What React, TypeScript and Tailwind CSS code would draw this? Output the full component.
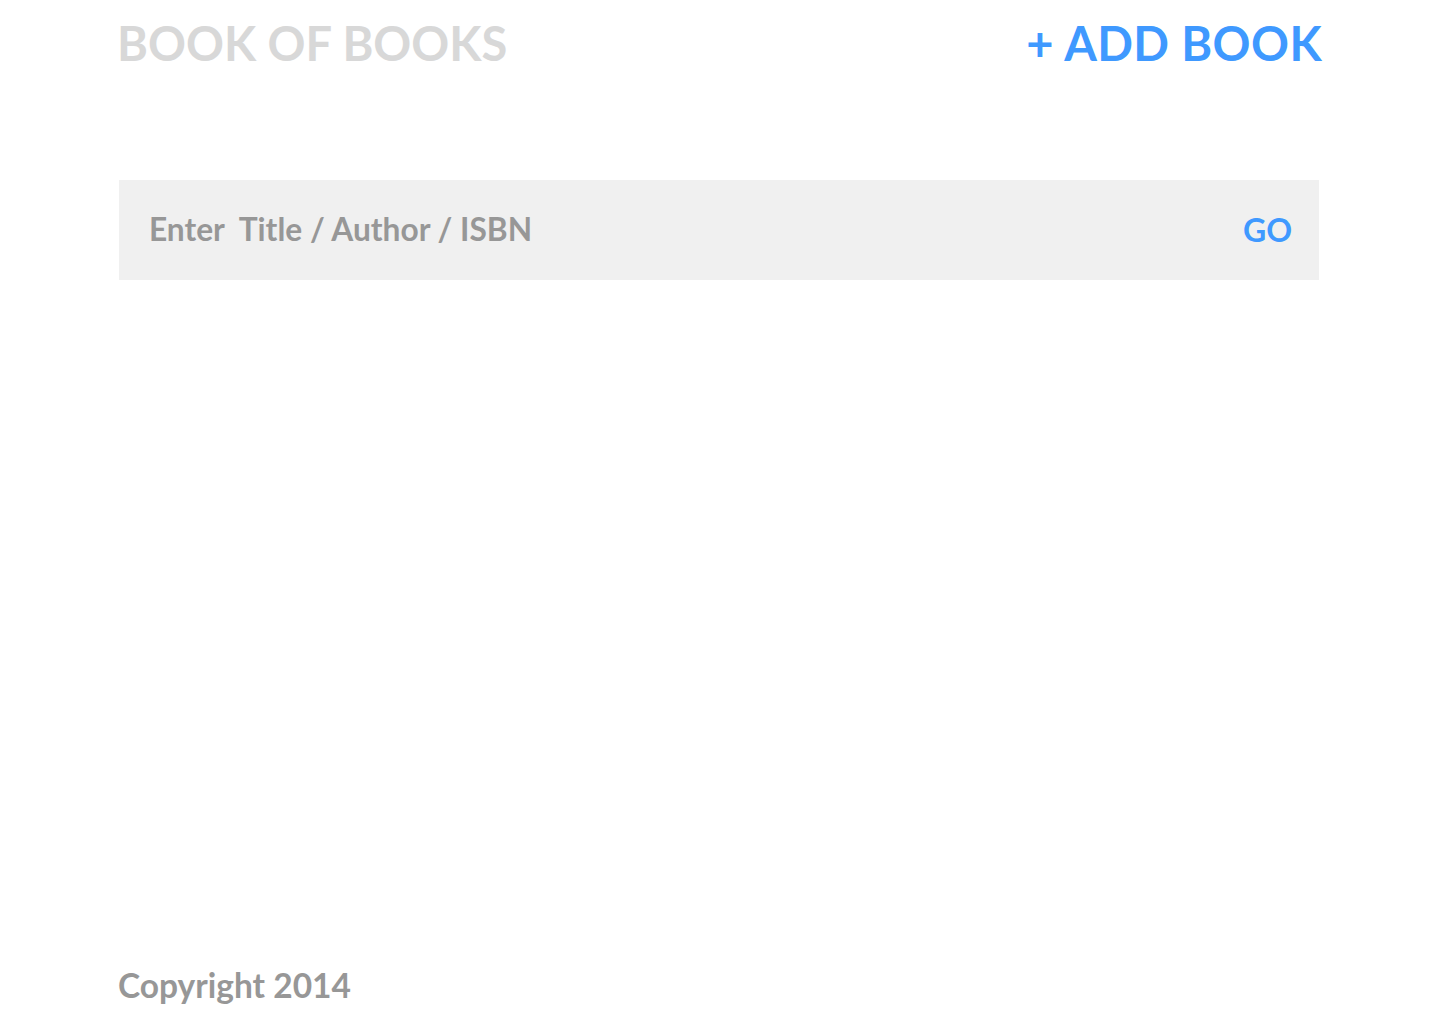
export default function App() {
  return (
    <div className="flex min-h-screen flex-col bg-white font-['Lato','Noto_Sans',sans-serif] font-bold">
      <div className="ml-[119px] flex w-[1200px] flex-1 flex-col">
        {/* Header */}
        <header className="flex h-[88px] items-start justify-between pt-[13px]">
          <h1 className="-ml-[2px] text-[47px] leading-[60px] text-[#d8d8d8]">BOOK OF BOOKS</h1>
          <button type="button" className="-mr-[3px] text-[47px] leading-[60px] tracking-[0.4px] text-[#3f99ff]">
            + ADD BOOK
          </button>
        </header>

        {/* Search */}
        <div className="mt-[92px] flex h-[100px] items-center justify-between bg-[#f0f0f0] pl-[30px] pr-[27px]">
          <input
            className="flex-1 bg-transparent text-[31.7px] text-[#979797] placeholder:text-[#979797] outline-none"
            placeholder="Enter  Title / Author / ISBN"
          />
          <button type="button" className="text-[32px] text-[#3f99ff]">GO</button>
        </div>

        <div className="flex-1" />

        {/* Footer */}
        <footer className="-ml-[1px] pb-[18px] text-[33.5px] leading-[42px] text-[#979797]">Copyright 2014</footer>
      </div>
    </div>
  )
}
